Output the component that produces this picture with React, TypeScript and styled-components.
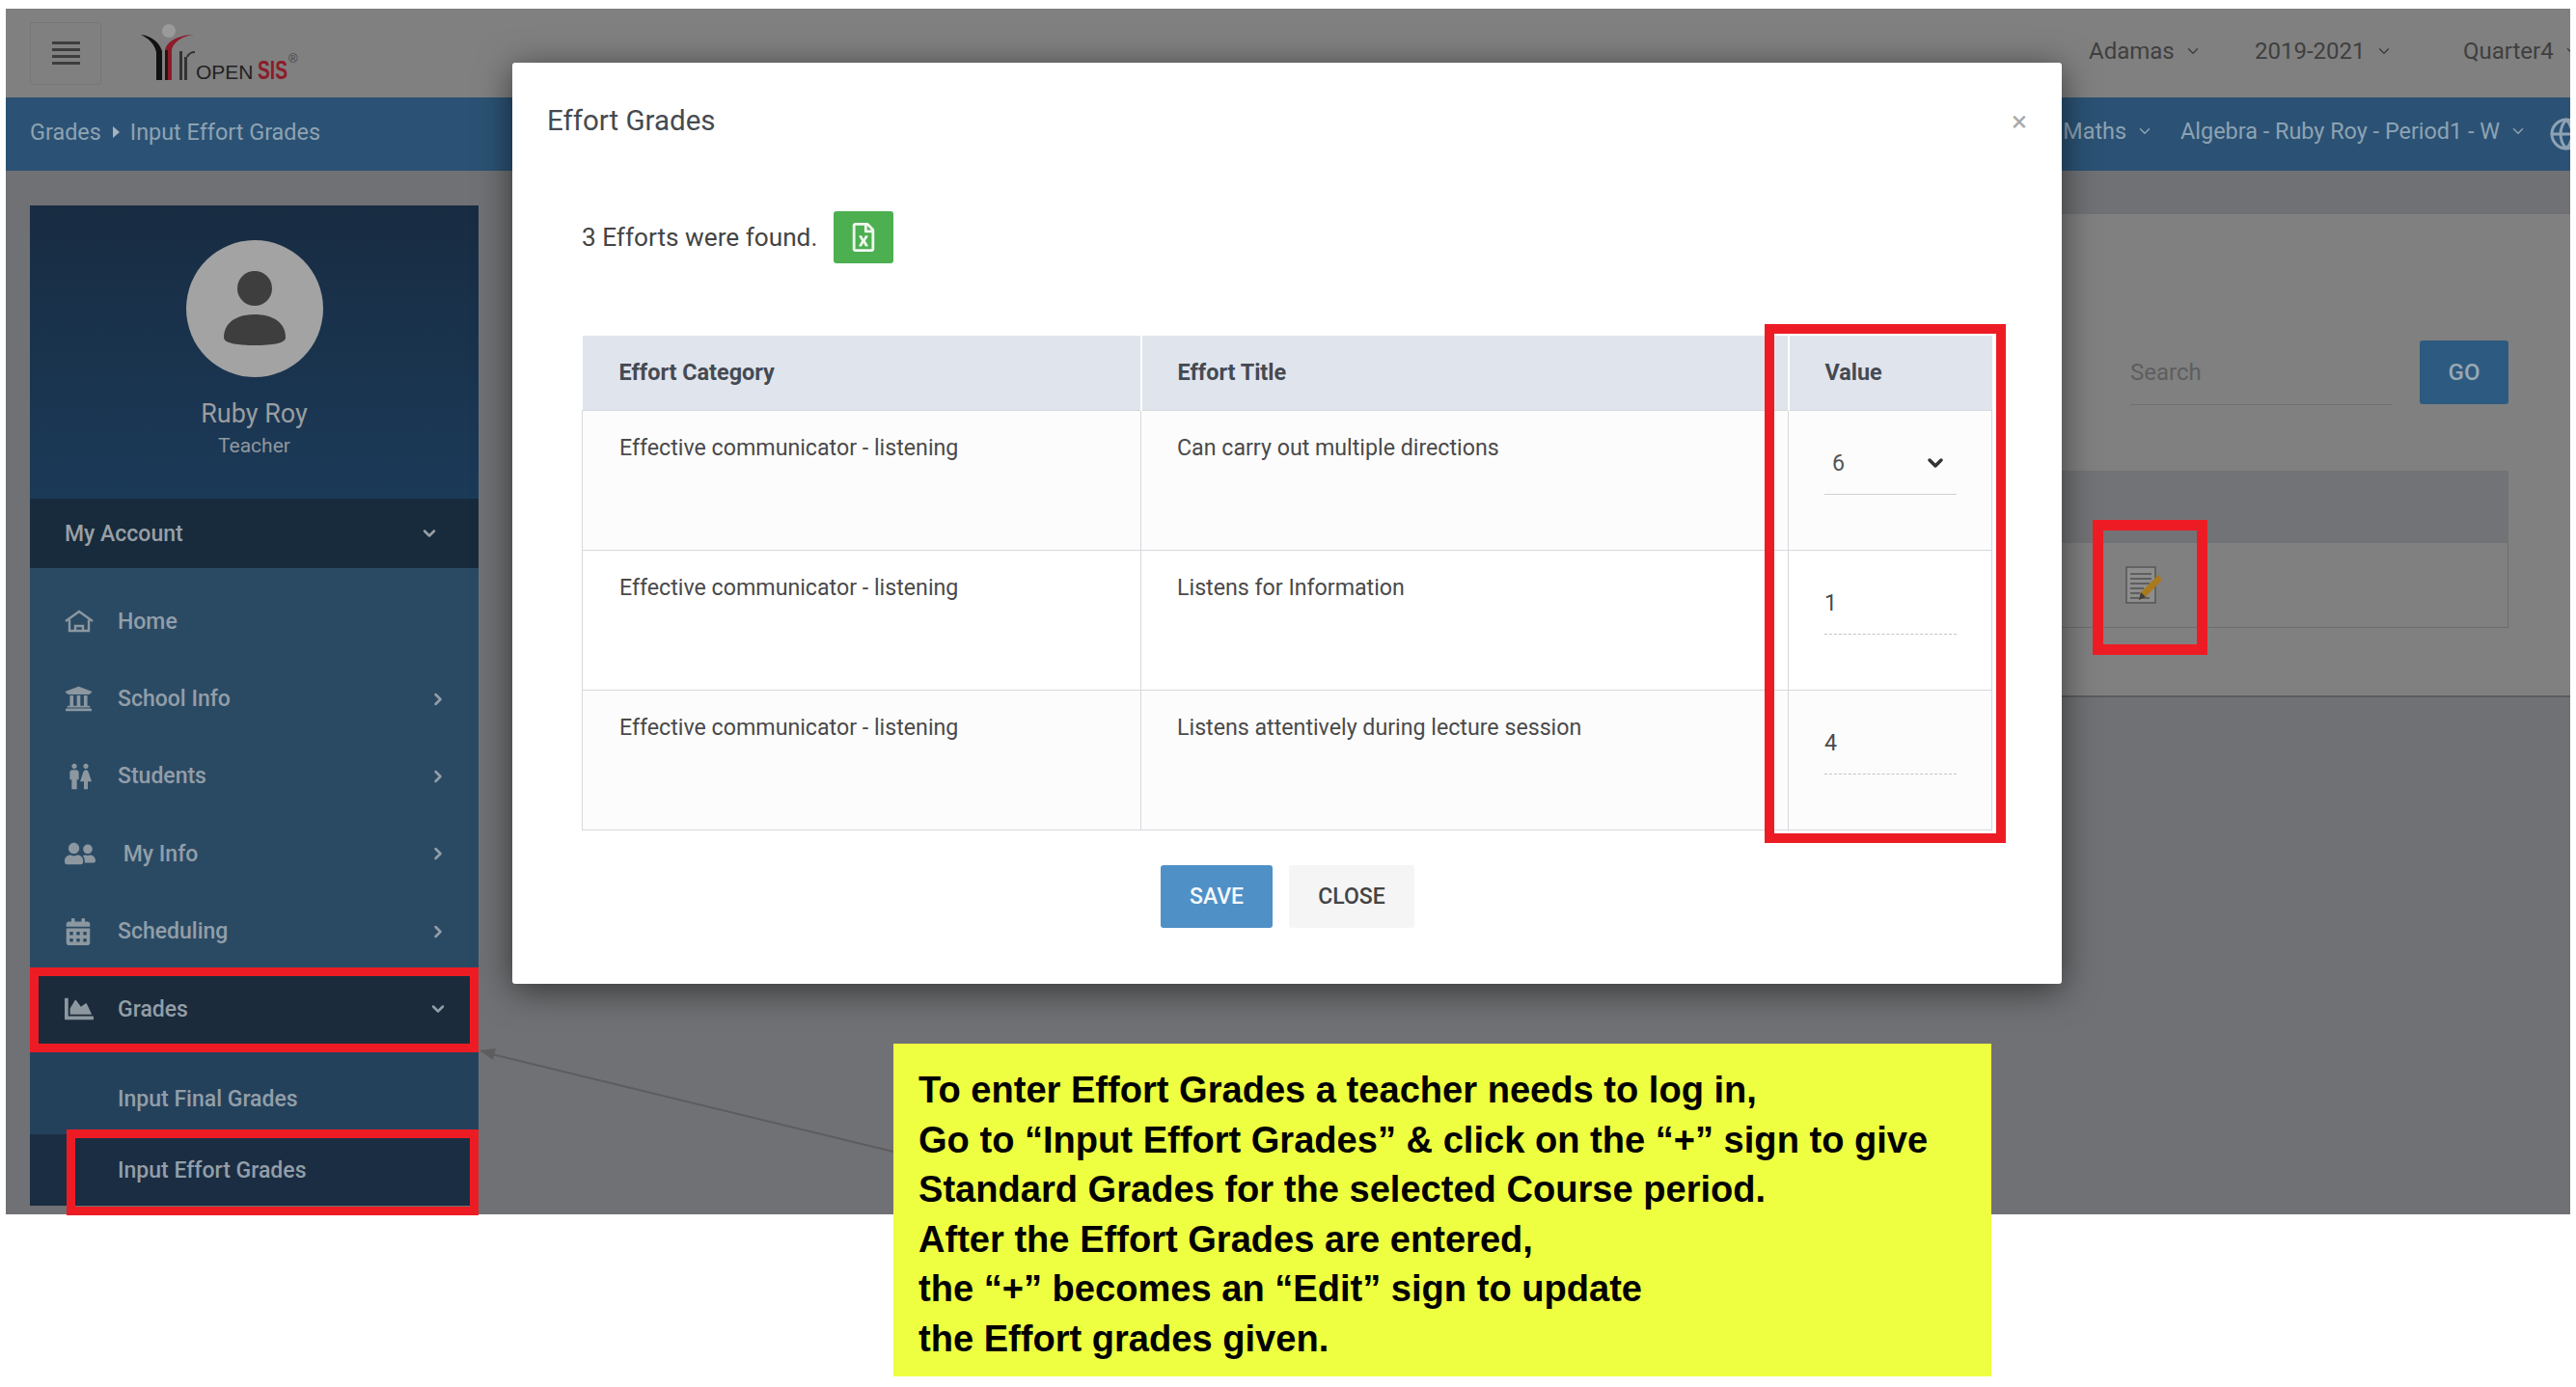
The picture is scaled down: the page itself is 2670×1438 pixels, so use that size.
import styled, { createGlobalStyle } from "styled-components";
import { FaCalendarAlt, FaChartArea, FaRegFileExcel, FaUniversity, FaUserFriends } from "react-icons/fa";
import { MdWc } from "react-icons/md";
import { LuChevronDown, LuChevronRight, LuGlobe } from "react-icons/lu";

const GlobalStyle = createGlobalStyle`
  html, body {
    margin: 0;
    padding: 0;
    background: #fff;
    font-family: Roboto, "Liberation Sans", sans-serif;
  }
`;

const Page = styled.div`
  position: relative;
  width: 2670px;
  height: 1438px;
  padding: 9px 6px 0;
  box-sizing: border-box;
  overflow: hidden;
`;

const Frame = styled.div`
  position: relative;
  width: 2658px;
  height: 1250px;
  background: #707174;
  overflow: hidden;
`;

const TopBar = styled.header`
  display: flex;
  align-items: center;
  height: 92px;
  padding-left: 25px;
  background: #808080;
  box-sizing: border-box;
`;

const MenuButton = styled.div`
  display: flex;
  align-items: center;
  justify-content: center;
  flex-shrink: 0;
  width: 74px;
  height: 65px;
  border: 1px solid #767676;
  border-radius: 3px;
  box-sizing: border-box;
`;

const LogoBox = styled.div`
  display: flex;
  flex-shrink: 0;
  margin-left: 40px;
  width: 167px;
  height: 64px;
`;

const TopMenu = styled.div`
  display: flex;
  align-items: center;
  flex-shrink: 0;
  gap: 38px;
  margin-left: 1853px;
  padding-bottom: 4px;
  font-size: 24px;
  color: #3f3f3f;
`;

const TopItem = styled.span<{ $width: number }>`
  display: flex;
  align-items: center;
  gap: 10px;
  width: ${(p) => p.$width}px;
  white-space: nowrap;
`;

const CrumbBar = styled.div`
  display: flex;
  align-items: center;
  height: 76px;
  padding: 0 0 5px 25px;
  box-sizing: border-box;
  background: #2b5274;
  color: #8ea2b3;
  font-size: 23.4px;
`;

const Crumb = styled.span`
  white-space: nowrap;
`;

const CrumbArrow = styled.span`
  width: 0;
  height: 0;
  margin: 0 11px 0 12px;
  border-left: 7px solid #a6b2bc;
  border-top: 6px solid transparent;
  border-bottom: 6px solid transparent;
`;

const CourseMenu = styled.div`
  display: flex;
  align-items: center;
  flex-shrink: 0;
  margin-left: auto;
  margin-top: -2px;
  margin-right: -14px;
  gap: 28px;
`;

const CourseItem = styled.span`
  display: flex;
  align-items: center;
  gap: 10px;
  white-space: nowrap;
`;

const GlobeMark = styled.span`
  display: flex;
  margin: 7px 0 0 -5px;
`;

const Body = styled.div`
  display: flex;
  padding: 36px 0 0 25px;
  gap: 64px;
`;

const Sidebar = styled.aside`
  flex: 0 0 465px;
  border-radius: 4px 4px 0 0;
  background: #2a4a64;
  color: #929ea8;
`;

const Profile = styled.div`
  display: flex;
  flex-direction: column;
  align-items: center;
  height: 304px;
  padding-top: 36px;
  box-sizing: border-box;
  background: linear-gradient(180deg, #182c42, #1b3a58);
`;

const Avatar = styled.svg`
  width: 142px;
  height: 142px;
  flex-shrink: 0;
`;

const UserName = styled.div`
  margin-top: 22px;
  font-size: 27px;
  line-height: 32px;
  color: #9a9da0;
`;

const UserRole = styled.div`
  margin-top: 4px;
  font-size: 21px;
  line-height: 26px;
  color: #8f979e;
`;

const AccountBar = styled.div`
  display: flex;
  align-items: center;
  justify-content: space-between;
  height: 72px;
  padding: 0 41px 0 36px;
  background: #172b3c;
  font-size: 23px;
  font-weight: 500;
  color: #999fa5;
`;

const NavList = styled.nav`
  padding-top: 15px;
`;

const NavItem = styled.div<{ $active?: boolean }>`
  display: flex;
  align-items: center;
  height: 80.4px;
  padding: 0 32px 0 36px;
  background: ${(p) => (p.$active ? "#1b2b3b" : "transparent")};
  font-size: 23px;
  font-weight: 500;
`;

const NavIcon = styled.span`
  display: flex;
  justify-content: flex-start;
  width: 55px;
  color: #8c979f;
`;

const NavArrow = styled.span`
  display: flex;
  margin-left: auto;
`;

const SubList = styled.div`
  padding-top: 16px;
  background: #24415c;
`;

const SubItem = styled.div<{ $active?: boolean }>`
  display: flex;
  align-items: center;
  height: 74px;
  padding-left: 91px;
  background: ${(p) => (p.$active ? "#1a2d42" : "transparent")};
  font-size: 23px;
  font-weight: 500;
`;

const Main = styled.main`
  flex: 1;
  padding-top: 9px;
`;

const Card = styled.section`
  height: 501px;
  padding: 131px 64px 0 0;
  box-sizing: border-box;
  background: #808080;
  border-bottom: 2px solid #5b5c5e;
`;

const SearchRow = styled.div`
  display: flex;
  justify-content: flex-end;
  gap: 28px;
`;

const SearchBox = styled.div`
  display: flex;
  align-items: center;
  width: 272px;
  height: 67px;
  border-bottom: 1px solid #6f6f6f;
  box-sizing: border-box;
  font-size: 24px;
  color: #5e5e5e;
`;

const GoButton = styled.div`
  display: flex;
  align-items: center;
  justify-content: center;
  width: 92px;
  height: 66px;
  border-radius: 3px;
  background: #2d5a80;
  color: #98a8b4;
  font-size: 24px;
  font-weight: 500;
`;

const GridHead = styled.div`
  height: 75px;
  margin-top: 68px;
  background: #727376;
`;

const GridRow = styled.div`
  display: flex;
  align-items: center;
  height: 88px;
  padding-left: 1642px;
  border: 1px solid #6c6c6c;
  border-top: 0;
  box-sizing: border-box;
`;

const Modal = styled.div`
  position: absolute;
  top: 56px;
  left: 525px;
  width: 1606px;
  height: 955px;
  padding: 32px 36px 0;
  box-sizing: border-box;
  background: #fff;
  border-radius: 3px;
  box-shadow: 0 6px 36px rgba(0, 0, 0, 0.55);
  color: #444;
`;

const ModalHead = styled.div`
  display: flex;
  align-items: center;
  justify-content: space-between;
  height: 56px;
`;

const ModalTitle = styled.h2`
  margin: 0;
  font-size: 29.5px;
  font-weight: 400;
  color: #454a50;
`;

const CloseMark = styled.span`
  margin-right: 0;
  font-size: 30px;
  color: #aaa;
`;

const CountRow = styled.div`
  display: flex;
  align-items: center;
  gap: 17px;
  margin: 66px 0 0 36px;
  font-size: 26.2px;
  color: #444;
`;

const ExcelButton = styled.div`
  display: flex;
  align-items: center;
  justify-content: center;
  width: 62px;
  height: 54px;
  border-radius: 3px;
  background: #4caf50;
  color: #f1f8f1;
`;

const Table = styled.table`
  width: 1461px;
  margin: 75px 0 0 36px;
  border-collapse: collapse;
  table-layout: fixed;
  font-size: 23.2px;
`;

const HeadCell = styled.th<{ $width: number }>`
  width: ${(p) => p.$width}px;
  height: 77px;
  padding: 0 0 0 37px;
  box-sizing: border-box;
  background: #e0e4ec;
  border-left: 2px solid #fff;
  text-align: left;
  font-size: 23.4px;
  font-weight: 700;
  color: #454a52;
  &:first-child {
    border-left: 0;
    padding-left: 38px;
  }
`;

const Row = styled.tr<{ $tint?: boolean }>`
  background: ${(p) => (p.$tint ? "#fcfcfc" : "#fff")};
`;

const Cell = styled.td`
  height: 145px;
  padding: 25px 0 0 37px;
  box-sizing: border-box;
  vertical-align: top;
  border: 1px solid #d6d8dc;
  color: #4a4a4a;
  line-height: 26px;
  &:first-child {
    padding-left: 38px;
  }
`;

const ValueCell = styled(Cell)`
  padding: 29px 36px 0 37px;
`;

const ValueSelect = styled.div`
  display: flex;
  align-items: center;
  justify-content: space-between;
  height: 58px;
  padding: 0 10px 6px 8px;
  box-sizing: border-box;
  border-bottom: 1px solid #d0d0d0;
  color: #555;
`;

const ValueInput = styled.div`
  display: flex;
  align-items: center;
  height: 58px;
  padding-bottom: 6px;
  box-sizing: border-box;
  border-bottom: 1px dashed #c4c4c4;
  color: #4a4a4a;
`;

const Actions = styled.div`
  display: flex;
  gap: 17px;
  margin: 36px 0 0 636px;
`;

const Button = styled.div<{ $primary?: boolean }>`
  display: flex;
  align-items: center;
  justify-content: center;
  width: ${(p) => (p.$primary ? 116 : 130)}px;
  height: 65px;
  border-radius: 3px;
  background: ${(p) => (p.$primary ? "#4f90c6" : "#f5f5f5")};
  color: ${(p) => (p.$primary ? "#f4f8fb" : "#444")};
  font-size: 23px;
  font-weight: 500;
`;

const RedBox = styled.div<{ $left: number; $top: number; $width: number; $height: number; $border: number }>`
  position: absolute;
  left: ${(p) => p.$left}px;
  top: ${(p) => p.$top}px;
  width: ${(p) => p.$width}px;
  height: ${(p) => p.$height}px;
  box-sizing: border-box;
  border: ${(p) => p.$border}px solid #ed1c24;
  pointer-events: none;
`;

const Pointer = styled.svg`
  position: absolute;
  left: 490px;
  top: 1080px;
  width: 440px;
  height: 120px;
`;

const Note = styled.aside`
  position: absolute;
  left: 926px;
  top: 1082px;
  width: 1138px;
  height: 345px;
  padding: 23px 0 0 26px;
  box-sizing: border-box;
  background: #eeff41;
  color: #000;
  font-family: "Liberation Sans", Arial, sans-serif;
  font-size: 38.1px;
  font-weight: 700;
  line-height: 51.5px;
  white-space: nowrap;
`;

const noteLines = [
  "To enter Effort Grades a teacher needs to log in,",
  "Go to “Input Effort Grades” & click on the “+” sign to give",
  "Standard Grades for the selected Course period.",
  "After the Effort Grades are entered,",
  "the “+” becomes an “Edit” sign to update",
  "the Effort grades given.",
];

const efforts = [
  { title: "Can carry out multiple directions", value: "6", select: true },
  { title: "Listens for Information", value: "1" },
  { title: "Listens attentively during lecture session", value: "4" },
];

function HomeIcon() {
  return (
    <svg width="30" height="24" viewBox="0 0 30 24" fill="none" stroke="#8c979f" strokeWidth="2.4">
      <path d="M1 12 15 2l14 10" />
      <path d="M5 10.5V22h20V10.5" />
      <path d="M11 22v-5h8v5" />
    </svg>
  );
}

function Logo() {
  return (
    <svg width="167" height="64" viewBox="0 0 167 64">
      <circle cx="30" cy="9" r="7" fill="#9a9a9a" />
      <path d="M1 13c10 1 19 7 22 17v30h-6V31C15 22 9 17 1 13Z" fill="#111" />
      <path d="M56 13c-10 1-20 6-23 15v32h-7V29c2-10 16-16 30-16Z" fill="#8c1c2a" />
      <path d="M26 29h3v31h-3Z" fill="#2a1212" />
      <path d="M41 30h3v30h-3ZM46 36h3v24h-3Z" fill="#333" />
      <path d="M49 36c2-4 5-5 8-5" fill="none" stroke="#333" strokeWidth="2" />
      <text x="58" y="59" fontFamily="Liberation Sans, sans-serif" fontSize="21" fill="#222">OPEN</text>
      <text x="122" y="59" fontFamily="Liberation Sans, sans-serif" fontSize="27" fontWeight="700" fill="#8c1c2a" textLength="31" lengthAdjust="spacingAndGlyphs">SIS</text>
      <text x="154" y="42" fontFamily="Liberation Sans, sans-serif" fontSize="13" fill="#444">®</text>
    </svg>
  );
}

function EditIcon() {
  return (
    <svg width="38" height="40" viewBox="0 0 38 40">
      <rect x="1" y="1" width="30" height="37" fill="#8d8d8d" stroke="#555" strokeWidth="1.5" />
      <path d="M5 8h22M5 13h22M5 18h20M5 23h14M5 28h10M5 33h20" stroke="#4f4f4f" strokeWidth="1.6" />
      <path d="M34 9l4 5-17 18-7 3 2-8Z" fill="#a9791d" />
      <path d="M16 27l-2 8 7-3Z" fill="#3c3c3c" />
    </svg>
  );
}

export default function App() {
  return (
    <Page>
      <GlobalStyle />
      <Frame>
        <TopBar>
          <MenuButton>
            <svg width="29" height="24" viewBox="0 0 29 24" fill="#3d3d3d">
              <rect y="0" width="29" height="3" />
              <rect y="7" width="29" height="3" />
              <rect y="14" width="29" height="3" />
              <rect y="21" width="29" height="3" />
            </svg>
          </MenuButton>
          <LogoBox>
            <Logo />
          </LogoBox>
          <TopMenu>
            <TopItem $width={134}>
              Adamas <LuChevronDown size={18} />
            </TopItem>
            <TopItem $width={178}>
              2019-2021 <LuChevronDown size={18} />
            </TopItem>
            <TopItem $width={140}>
              Quarter4 <LuChevronDown size={18} />
            </TopItem>
          </TopMenu>
        </TopBar>
        <CrumbBar>
          <Crumb>Grades</Crumb>
          <CrumbArrow />
          <Crumb>Input Effort Grades</Crumb>
          <CourseMenu>
            <CourseItem>
              Maths <LuChevronDown size={18} />
            </CourseItem>
            <CourseItem>
              Algebra - Ruby Roy - Period1 - W <LuChevronDown size={18} />
            </CourseItem>
            <GlobeMark>
              <LuGlobe size={36} />
            </GlobeMark>
          </CourseMenu>
        </CrumbBar>
        <Body>
          <Sidebar>
            <Profile>
              <Avatar viewBox="0 0 142 142">
                <circle cx="71" cy="71" r="71" fill="#a3a3a3" />
                <circle cx="71" cy="50" r="18" fill="#3e3e3e" />
                <path d="M39 101c0-16 14-24 32-24s32 8 32 24c0 6-14 8-32 8s-32-2-32-8Z" fill="#3e3e3e" />
              </Avatar>
              <UserName>Ruby Roy</UserName>
              <UserRole>Teacher</UserRole>
            </Profile>
            <AccountBar>
              My Account <LuChevronDown size={20} strokeWidth={3} />
            </AccountBar>
            <NavList>
              <NavItem>
                <NavIcon>
                  <HomeIcon />
                </NavIcon>
                Home
              </NavItem>
              <NavItem>
                <NavIcon>
                  <FaUniversity size={29} />
                </NavIcon>
                School Info
                <NavArrow>
                  <LuChevronRight size={20} strokeWidth={3} />
                </NavArrow>
              </NavItem>
              <NavItem>
                <NavIcon>
                  <MdWc size={32} />
                </NavIcon>
                Students
                <NavArrow>
                  <LuChevronRight size={20} strokeWidth={3} />
                </NavArrow>
              </NavItem>
              <NavItem>
                <NavIcon>
                  <FaUserFriends size={32} />
                </NavIcon>
                &nbsp;My Info
                <NavArrow>
                  <LuChevronRight size={20} strokeWidth={3} />
                </NavArrow>
              </NavItem>
              <NavItem>
                <NavIcon>
                  <FaCalendarAlt size={28} />
                </NavIcon>
                Scheduling
                <NavArrow>
                  <LuChevronRight size={20} strokeWidth={3} />
                </NavArrow>
              </NavItem>
              <NavItem $active>
                <NavIcon>
                  <FaChartArea size={30} />
                </NavIcon>
                Grades
                <NavArrow>
                  <LuChevronDown size={20} strokeWidth={3} />
                </NavArrow>
              </NavItem>
            </NavList>
            <SubList>
              <SubItem>Input Final Grades</SubItem>
              <SubItem $active>Input Effort Grades</SubItem>
            </SubList>
          </Sidebar>
          <Main>
            <Card>
              <SearchRow>
                <SearchBox>Search</SearchBox>
                <GoButton>GO</GoButton>
              </SearchRow>
              <GridHead />
              <GridRow>
                <EditIcon />
              </GridRow>
            </Card>
          </Main>
        </Body>
        <Modal>
          <ModalHead>
            <ModalTitle>Effort Grades</ModalTitle>
            <CloseMark>×</CloseMark>
          </ModalHead>
          <CountRow>
            3 Efforts were found.
            <ExcelButton>
              <FaRegFileExcel size={30} />
            </ExcelButton>
          </CountRow>
          <Table>
            <thead>
              <tr>
                <HeadCell $width={579}>Effort Category</HeadCell>
                <HeadCell $width={671}>Effort Title</HeadCell>
                <HeadCell $width={211}>Value</HeadCell>
              </tr>
            </thead>
            <tbody>
              {efforts.map((effort, i) => (
                <Row key={effort.title} $tint={i !== 1}>
                  <Cell>Effective communicator - listening</Cell>
                  <Cell>{effort.title}</Cell>
                  <ValueCell>
                    {effort.select ? (
                      <ValueSelect>
                        {effort.value}
                        <LuChevronDown size={24} strokeWidth={3.5} color="#333" />
                      </ValueSelect>
                    ) : (
                      <ValueInput>{effort.value}</ValueInput>
                    )}
                  </ValueCell>
                </Row>
              ))}
            </tbody>
          </Table>
          <Actions>
            <Button $primary>SAVE</Button>
            <Button>CLOSE</Button>
          </Actions>
        </Modal>
      </Frame>
      <RedBox $left={1829} $top={336} $width={250} $height={538} $border={10} />
      <RedBox $left={2169} $top={539} $width={119} $height={140} $border={11} />
      <RedBox $left={31} $top={1003} $width={465} $height={88} $border={9} />
      <RedBox $left={69} $top={1171} $width={427} $height={89} $border={9} />
      <Pointer viewBox="0 0 440 120">
        <path d="M436 114 20 13" stroke="#5d5d5f" strokeWidth="2" fill="none" />
        <path d="M7 9 24 7 21 19Z" fill="#5d5d5f" />
      </Pointer>
      <Note>
        {noteLines.map((line) => (
          <div key={line}>{line}</div>
        ))}
      </Note>
    </Page>
  );
}
